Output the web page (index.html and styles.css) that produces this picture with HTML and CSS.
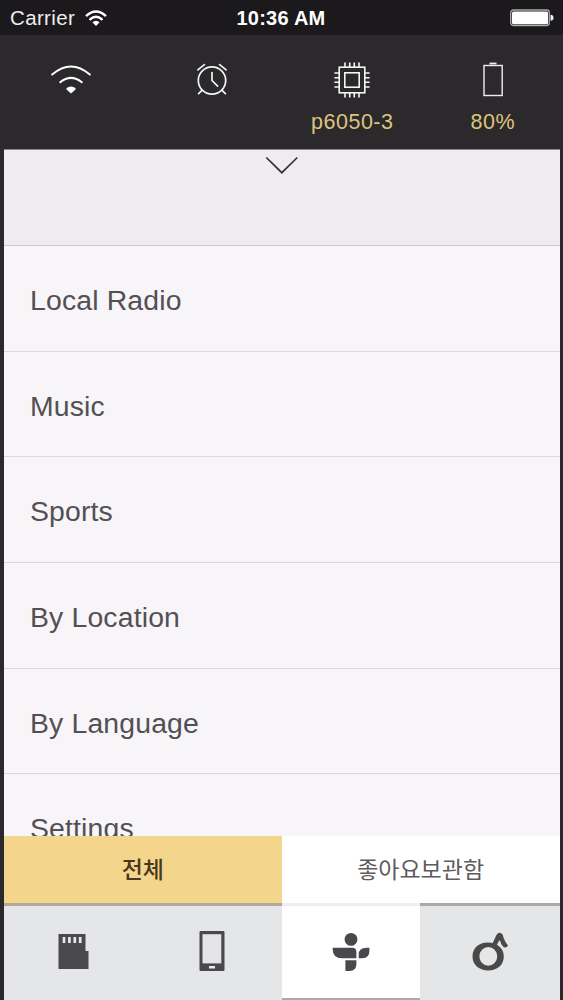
FILE: index.html
```html
<!DOCTYPE html>
<html lang="ko">
<head>
<meta charset="utf-8">
<title>Radio</title>
<link rel="stylesheet" href="styles.css">
</head>
<body>
<div class="screen">
  <header class="status-bar">
    <div class="carrier"><span class="carrier-name">Carrier</span>
      <svg width="22" height="17" viewBox="0 0 22 17" fill="none" stroke="#fff" stroke-width="2.3"><path d="M1 6.2Q11-3.2 21 6.2M4.5 9.8Q11 3.8 17.5 9.8"/><path d="M7.4 12.3Q11 9.3 14.6 12.3L11 16Z" fill="#fff" stroke="none"/></svg>
    </div>
    <div class="clock">10:36 AM</div>
    <div class="power"><svg width="44" height="18" viewBox="0 0 44 18"><rect x=".7" y="1" width="38.6" height="15.5" rx="2.8" fill="none" stroke="#aaa9ac" stroke-width="1.3"/><rect x="2" y="2.4" width="36" height="12.8" rx="1.5" fill="#fff"/><path d="M40.5 5.8q3 .2 3 3t-3 3z" fill="#eee"/></svg></div>
  </header>
  <section class="device-bar">
    <div class="device-item"><svg width="40" height="36" viewBox="0 0 40 36" fill="none" stroke="#fff" stroke-width="2" stroke-linecap="round"><path d="M1.2 12.5Q20-3.6 38.8 12.5M9.2 20.2Q20 11.5 30.8 20.2"/><path d="M15.5 26Q20 22.8 24.5 26V27.5L20 31.5L15.5 27.5Z" fill="#fff" stroke="none"/></svg></div>
    <div class="device-item"><svg width="32" height="36" viewBox="0 0 32 36" fill="none" stroke="#f5f5f5" stroke-width="1.7" stroke-linecap="round"><circle cx="16" cy="18.5" r="13.7"/><path d="M16 10.5V18.5L21.6 24.2M1.8 7.8L8.4 2.6M30.2 7.8L23.6 2.6M6.2 28.2L2.6 31.6M25.8 28.2L29.4 31.6"/></svg></div>
    <div class="device-item"><svg width="36" height="36" viewBox="0 0 36 36" fill="none" stroke="#f5f5f5" stroke-width="1.6"><rect x="5.2" y="5.2" width="25.6" height="25.6"/><rect x="10.8" y="10.8" width="14.4" height="14.4"/><path d="M11 5V.6M15.7 5V.6M20.3 5V.6M25 5V.6M11 31V35.4M15.7 31V35.4M20.3 31V35.4M25 31V35.4M5 11H.4M5 15.7H.4M5 20.3H.4M5 25H.4M31 11H35.6M31 15.7H35.6M31 20.3H35.6M31 25H35.6"/></svg><span class="device-label">p6050-3</span></div>
    <div class="device-item"><svg width="20" height="36" viewBox="0 0 20 36" fill="none" stroke="#eee" stroke-width="1.4"><rect x="1" y="3.5" width="18.2" height="30"/><path d="M6.5 1.5H13.5" stroke-width="1.8"/></svg><span class="device-label">80%</span></div>
  </section>
  <main class="panel">
    <div class="drawer"><svg width="34" height="20" viewBox="0 0 34 20" fill="none" stroke="#353238" stroke-width="1.7"><path d="M1.3 1.5L16.8 16.7L32.3 1.5"/></svg></div>
    <ul class="menu">
      <li class="menu-row">Local Radio</li>
      <li class="menu-row">Music</li>
      <li class="menu-row">Sports</li>
      <li class="menu-row">By Location</li>
      <li class="menu-row">By Language</li>
      <li class="menu-row">Settings</li>
    </ul>
    <div class="tabs"><div class="tab tab-active">전체</div><div class="tab">좋아요보관함</div></div>
    <nav class="sources">
      <div class="source"><svg width="32" height="40" viewBox="0 0 32 40"><path d="M1.5 3H28.5V20H31.5V38H1.5Z" fill="#4a494c"/><path d="M7 6V12M12.4 6V12M17.8 6V12M23.2 6V12" stroke="#e8e8e9" stroke-width="2.7"/></svg></div>
      <div class="source"><svg width="26" height="40" viewBox="0 0 26 40"><rect x=".5" width="25" height="40" rx="1" fill="#4a494c"/><rect x="3.5" y="3.2" width="18.8" height="29.2" fill="#e5e5e7"/><rect x="10" y="35" width="6" height="2.5" fill="#eee"/></svg></div>
      <div class="source source-active"><svg width="38" height="38" viewBox="0 0 38 38" fill="#4a484c"><circle cx="19" cy="6.4" r="6.4"/><path d="M.7 14.8H20Q24.4 14.8 24.4 19V25.2H10Q.7 25.2.7 16.5ZM26.7 25.2V21.5Q26.7 14.8 34.5 14.8H37.4V18Q37.4 25.2 30.5 25.2ZM13.4 27.2H24.4V31Q24.4 37.9 17.5 37.9H13.4Z"/></svg></div>
      <div class="source"><svg width="38" height="40" viewBox="0 0 38 40" fill="#494949"><path fill-rule="evenodd" d="M17.5 11.5C27.5 11.5 33.8 17.3 33.8 25.3C33.8 34.3 27 39.5 18.2 39.5C8.5 39.5 2.5 33.5 2.5 25.6C2.5 17 9 11.5 17.5 11.5ZM18.3 16.1A8.9 9.3 0 1 0 18.3 34.7A8.9 9.3 0 1 0 18.3 16.1Z"/><path d="M22.5 12.5L26.3 4.2Q29.5-.4 32.6 3.6Q34.4 10.5 38 14.5Q36.5 17.5 33.4 16Q30.5 12.8 29.8 9Q28 11 26.6 14.5Z"/></svg></div>
    </nav>
  </main>
</div>
</body>
</html>
```
FILE: styles.css
```css
* { box-sizing: border-box; }
body { margin: 0; background: #2b292c; font-family: "Liberation Sans", "Noto Sans CJK KR", sans-serif; }
svg { display: block; flex: none; }
.screen { width: 563px; height: 1000px; overflow: hidden; display: flex; flex-direction: column; background: #2b292c; }
.status-bar { height: 35px; flex: none; display: grid; grid-template-columns: 1fr auto 1fr; align-items: center; padding: 1px 9px 0 10px; background: #1b191c; color: #fff; }
.carrier { display: flex; align-items: center; gap: 10px; }
.carrier-name { font-size: 20.5px; letter-spacing: .35px; color: #eee; }
.clock { font-size: 20px; font-weight: bold; letter-spacing: .25px; margin-right: 2px; }
.power { display: flex; justify-content: flex-end; }
.device-bar { height: 114px; flex: none; display: grid; grid-template-columns: repeat(4, 140.6px); padding: 27px 0 0 .8px; }
.device-item { display: flex; flex-direction: column; align-items: center; gap: 11px; }
.device-label { font-size: 21.5px; line-height: 26px; letter-spacing: .5px; color: #dec47d; }
.panel { flex: 1; min-height: 0; margin: 0 3.5px 0 4px; display: flex; flex-direction: column; background: #f7f5f8; }
.drawer { height: 97px; flex: none; display: flex; justify-content: center; padding: 6px 0 0 1px; background: #eeecef; border-top: 1px solid #89878a; border-bottom: 1.5px solid #cbc9cc; }
.menu { flex: 1; min-height: 0; overflow: hidden; margin: 0; padding: 0; list-style: none; }
.menu-row { height: 105.7px; display: flex; align-items: center; padding: 4px 26px 0; font-size: 28.4px; letter-spacing: .15px; color: #525054; border-bottom: 1px solid #dad8dc; }
.tabs { height: 70px; flex: none; display: grid; grid-template-columns: 1fr 1fr; background: #fff; }
.tab { display: flex; align-items: center; justify-content: center; padding-bottom: 4px; font-family: "Noto Sans CJK KR", sans-serif; font-size: 23px; color: #5e5b60; border-bottom: 3px solid; border-image: linear-gradient(to right, #efeff0 138px, #a9a9ab 138px) 3; }
.tab-active { background: #f4d58c; color: #4a3720; font-weight: 500; border-image: none; border-bottom-color: #b0aa9e; }
.sources { height: 94px; flex: none; display: grid; grid-template-columns: 139px 139px 138px 1fr; background: #e5e6e8; }
.source { display: flex; align-items: center; justify-content: center; padding: 0 2px 4px 0; }
.source-active { background: #fff; border-bottom: 2px solid #aaa9ab; padding: 0; }
```
